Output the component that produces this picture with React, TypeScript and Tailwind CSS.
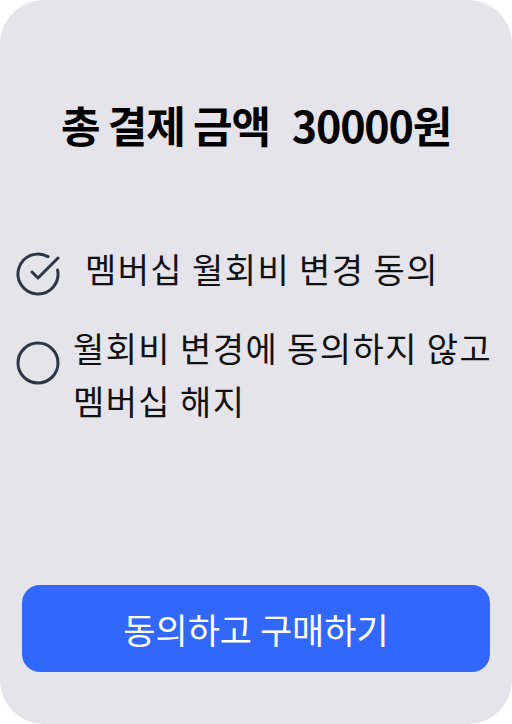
import React from "react";

const font = { fontFamily: '"Noto Sans CJK KR", "Noto Sans", sans-serif' };

function CheckIcon() {
  return (
    <svg width="48" height="48" viewBox="0 0 24 24" fill="none" stroke="#2d3546" strokeWidth="1.5" strokeLinecap="round" strokeLinejoin="round">
      <path d="M21.801 10A10 10 0 1 1 17 3.335" />
      <path d="m9 11 3 3L22 4" />
    </svg>
  );
}

function CircleIcon() {
  return (
    <svg width="48" height="48" viewBox="0 0 24 24" fill="none" stroke="#2d3546" strokeWidth="1.5">
      <circle cx="12" cy="12" r="10" />
    </svg>
  );
}

export default function App() {
  return (
    <div className="w-[512px] h-[724px] bg-white" style={font}>
      <div className="w-full h-full bg-[#e5e4ea] rounded-[44px] flex flex-col">
        <div className="pt-[98px] text-center text-[43px] leading-[52px] font-bold text-black tracking-[-1.2px]">
          총 결제 금액<span className="ml-[22px]">30000원</span>
        </div>
        <div className="mt-[92px] flex flex-col gap-[23px] pl-[14px] text-[34px] leading-[53px] tracking-[1.4px] text-[#111111]">
          <div className="flex items-start">
            <div className="mt-[8px] shrink-0"><CheckIcon /></div>
            <span className="ml-[23px]">멤버십 월회비 변경 동의</span>
          </div>
          <div className="flex items-start">
            <div className="mt-[18px] shrink-0"><CircleIcon /></div>
            <span className="ml-[11px]">월회비 변경에 동의하지 않고<br />멤버십 해지</span>
          </div>
        </div>
        <div className="flex-1" />
        <div className="px-[22px] pb-[52px]">
          <button className="w-full h-[87px] rounded-[18px] bg-[#3168fb] text-white text-[35px] leading-[44px] flex items-center justify-center">
            동의하고 구매하기
          </button>
        </div>
      </div>
    </div>
  );
}
